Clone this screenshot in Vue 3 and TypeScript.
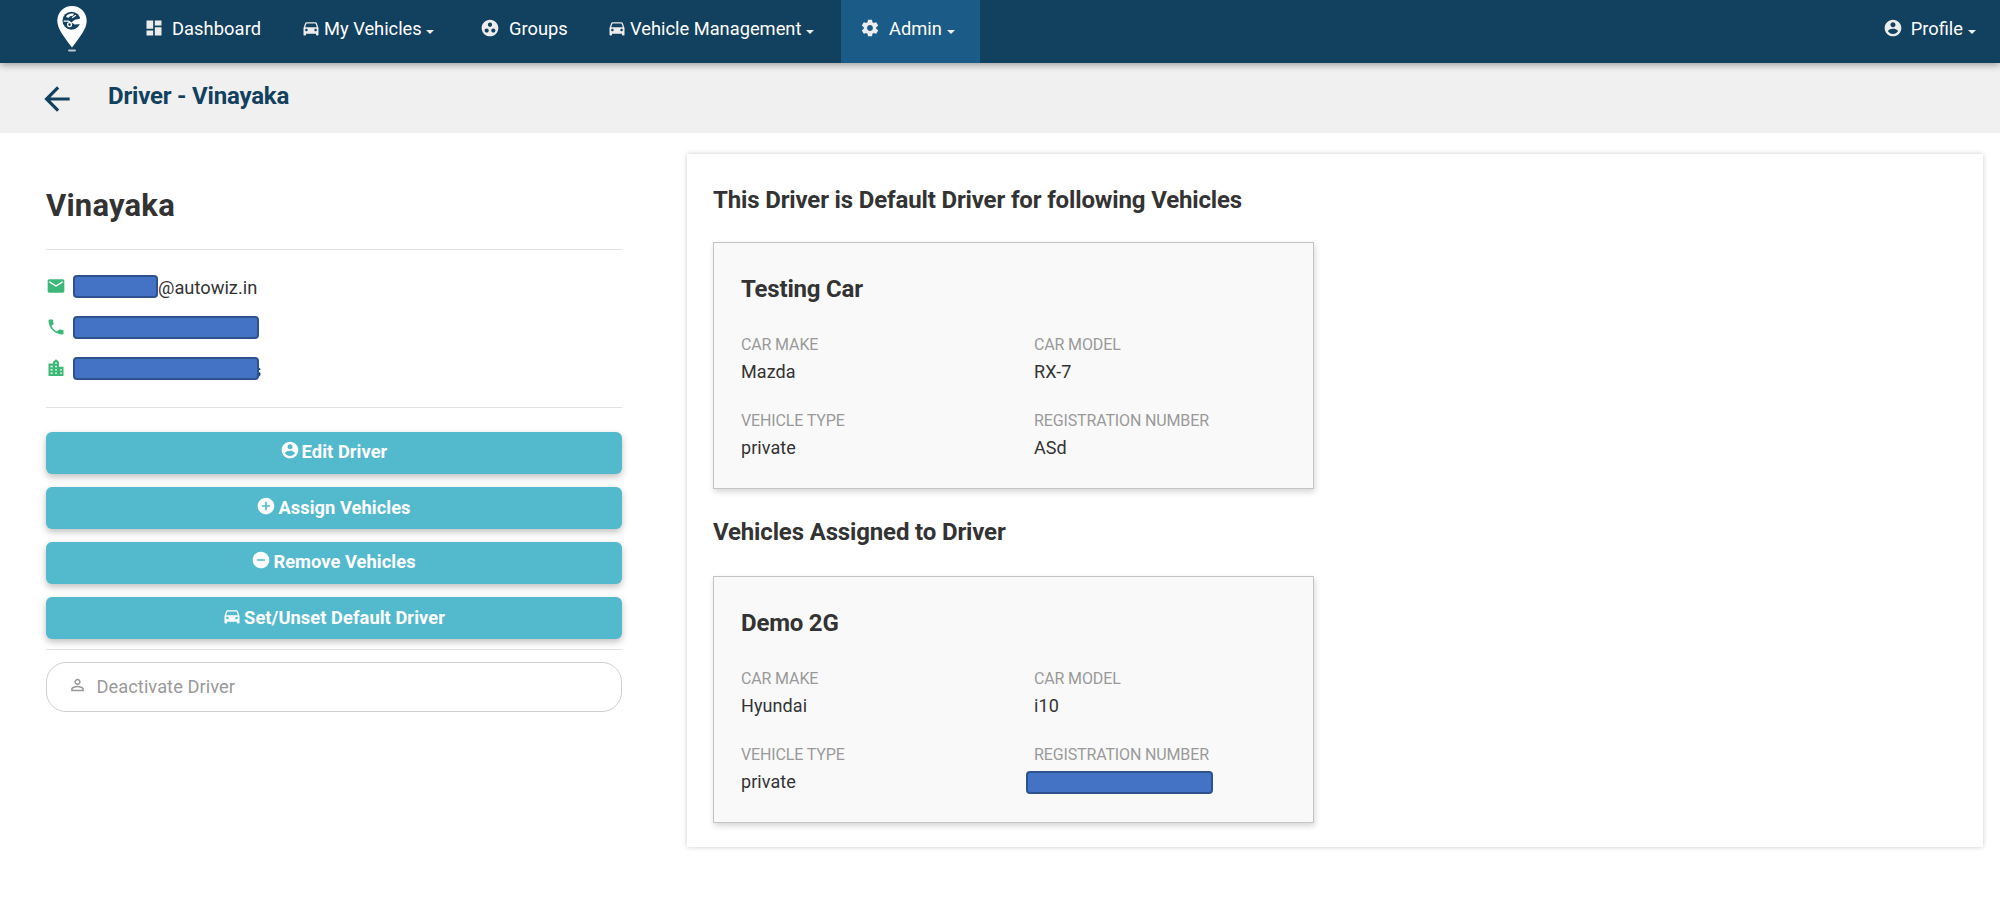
<script setup lang="ts">
interface NavItem { id: string; label: string; icon: string; caret: boolean; active?: boolean }
interface Action { id: string; label: string; icon: string }
interface Field { label: string; value: string; hidden?: boolean }
interface Vehicle { name: string; fields: Field[] }
interface Section { title: string; vehicle: Vehicle }

const icons: Record<string, string> = {
  dashboard: 'M3 13h8V3H3v10zm0 8h8v-6H3v6zm10 0h8V11h-8v10zm0-18v6h8V3h-8z',
  car: 'M18.92 6.01C18.72 5.42 18.16 5 17.5 5h-11c-.66 0-1.21.42-1.42 1.01L3 12v8c0 .55.45 1 1 1h1c.55 0 1-.45 1-1v-1h12v1c0 .55.45 1 1 1h1c.55 0 1-.45 1-1v-8l-2.08-5.99zM6.5 16c-.83 0-1.5-.67-1.5-1.5S5.67 13 6.5 13s1.5.67 1.5 1.5S7.33 16 6.5 16zm11 0c-.83 0-1.5-.67-1.5-1.5s.67-1.5 1.5-1.5 1.5.67 1.5 1.5-.67 1.5-1.5 1.5zM5 11l1.5-4.5h11L19 11H5z',
  group: 'M12 2C6.48 2 2 6.48 2 12s4.48 10 10 10 10-4.48 10-10S17.52 2 12 2zM8 17.5c-1.38 0-2.5-1.12-2.5-2.5s1.12-2.5 2.5-2.5 2.5 1.12 2.5 2.5-1.12 2.5-2.5 2.5zM9.5 8c0-1.38 1.12-2.5 2.5-2.5s2.5 1.12 2.5 2.5-1.12 2.5-2.5 2.5S9.5 9.38 9.5 8zm6.5 9.5c-1.38 0-2.5-1.12-2.5-2.5s1.12-2.5 2.5-2.5 2.5 1.12 2.5 2.5-1.12 2.5-2.5 2.5z',
  gear: 'M19.43 12.98c.04-.32.07-.64.07-.98s-.03-.66-.07-.98l2.11-1.65c.19-.15.24-.42.12-.64l-2-3.46c-.12-.22-.39-.3-.61-.22l-2.49 1c-.52-.4-1.08-.73-1.69-.98l-.38-2.65C14.46 2.18 14.25 2 14 2h-4c-.25 0-.46.18-.49.42l-.38 2.65c-.61.25-1.17.59-1.69.98l-2.49-1c-.23-.09-.49 0-.61.22l-2 3.46c-.13.22-.07.49.12.64l2.11 1.65c-.04.32-.07.65-.07.98s.03.66.07.98l-2.11 1.65c-.19.15-.24.42-.12.64l2 3.46c.12.22.39.3.61.22l2.49-1c.52.4 1.08.73 1.69.98l.38 2.65c.03.24.24.42.49.42h4c.25 0 .46-.18.49-.42l.38-2.65c.61-.25 1.17-.59 1.69-.98l2.49 1c.23.09.49 0 .61-.22l2-3.46c.12-.22.07-.49-.12-.64l-2.11-1.65zM12 15.5c-1.93 0-3.5-1.57-3.5-3.5s1.57-3.5 3.5-3.5 3.5 1.57 3.5 3.5-1.57 3.5-3.5 3.5z',
  account: 'M12 2C6.48 2 2 6.48 2 12s4.48 10 10 10 10-4.48 10-10S17.52 2 12 2zm0 3c1.66 0 3 1.34 3 3s-1.34 3-3 3-3-1.34-3-3 1.34-3 3-3zm0 14.2c-2.5 0-4.71-1.28-6-3.22.03-1.99 4-3.08 6-3.08 1.99 0 5.97 1.09 6 3.08-1.29 1.94-3.5 3.22-6 3.22z',
  plus: 'M12 2C6.48 2 2 6.48 2 12s4.48 10 10 10 10-4.48 10-10S17.52 2 12 2zm5 11h-4v4h-2v-4H7v-2h4V7h2v4h4v2z',
  minus: 'M12 2C6.48 2 2 6.48 2 12s4.48 10 10 10 10-4.48 10-10S17.52 2 12 2zm5 11H7v-2h10v2z',
  mail: 'M20 4H4c-1.1 0-1.99.9-1.99 2L2 18c0 1.1.9 2 2 2h16c1.1 0 2-.9 2-2V6c0-1.1-.9-2-2-2zm0 4l-8 5-8-5V6l8 5 8-5v2z',
  phone: 'M6.62 10.79c1.44 2.83 3.76 5.14 6.59 6.59l2.2-2.2c.27-.27.67-.36 1.02-.24 1.12.37 2.33.57 3.57.57.55 0 1 .45 1 1V20c0 .55-.45 1-1 1-9.39 0-17-7.61-17-17 0-.55.45-1 1-1h3.500c.55 0 1 .45 1 1 0 1.250.2 2.450.57 3.570.110.350.030.740-.250 1.020l-2.200 2.200z',
  city: 'M15.5 10.5v-6L12 1.500 8.500 4.500v2H3v15h18v-11h-5.500zM8 19H5.500v-1.600H8V19zm0-4H5.500v-1.600H8V15zm0-4H5.500V9.400H8V11zm5 8h-2v-1.600h2V19zm0-4h-2v-1.600h2V15zm0-4h-2V9.400h2V11zm0-4h-2V5.400h2V7zm6 12h-2v-1.600h2V19zm0-4h-2v-1.600h2V15z',
  person: 'M12 5.900c1.160 0 2.100.94 2.100 2.100s-.94 2.100-2.100 2.100S9.900 9.160 9.900 8s.94-2.100 2.100-2.100m0 9c2.970 0 6.100 1.460 6.100 2.100v1.100H5.900V17c0-.64 3.130-2.100 6.100-2.100M12 4C9.790 4 8 5.790 8 8s1.790 4 4 4 4-1.790 4-4-1.790-4-4-4zm0 9c-2.670 0-8 1.340-8 4v3h16v-3c0-2.660-5.330-4-8-4z',
  back: 'M20 11H7.83l5.590-5.590L12 4l-8 8 8 8 1.410-1.410L7.830 13H20v-2z',
}

const nav: NavItem[] = [
  { id: 'dashboard', label: 'Dashboard', icon: 'dashboard', caret: false },
  { id: 'vehicles', label: 'My Vehicles', icon: 'car', caret: true },
  { id: 'groups', label: 'Groups', icon: 'group', caret: false },
  { id: 'management', label: 'Vehicle Management', icon: 'car', caret: true },
  { id: 'admin', label: 'Admin', icon: 'gear', caret: true, active: true },
  { id: 'profile', label: 'Profile', icon: 'account', caret: true },
]

const actions: Action[] = [
  { id: 'edit', label: 'Edit Driver', icon: 'account' },
  { id: 'assign', label: 'Assign Vehicles', icon: 'plus' },
  { id: 'remove', label: 'Remove Vehicles', icon: 'minus' },
  { id: 'default', label: 'Set/Unset Default Driver', icon: 'car' },
]

const sections: Section[] = [
  {
    title: 'This Driver is Default Driver for following Vehicles',
    vehicle: {
      name: 'Testing Car',
      fields: [
        { label: 'CAR MAKE', value: 'Mazda' },
        { label: 'CAR MODEL', value: 'RX-7' },
        { label: 'VEHICLE TYPE', value: 'private' },
        { label: 'REGISTRATION NUMBER', value: 'ASd' },
      ],
    },
  },
  {
    title: 'Vehicles Assigned to Driver',
    vehicle: {
      name: 'Demo 2G',
      fields: [
        { label: 'CAR MAKE', value: 'Hyundai' },
        { label: 'CAR MODEL', value: 'i10' },
        { label: 'VEHICLE TYPE', value: 'private' },
        { label: 'REGISTRATION NUMBER', value: '', hidden: true },
      ],
    },
  },
]
</script>

<template>
  <div class="page">
    <nav class="navbar">
      <div class="brand">
        <svg class="logo" viewBox="0 0 32 48">
          <path fill="#fff" d="M16 0C7.500 0 1 6.500 1 15c0 8.500 7 16.500 15 27.500C24 31.500 31 23.500 31 15 31 6.500 24.500 0 16 0z" />
          <circle cx="15.500" cy="15" r="9.200" fill="#12405f" />
          <path fill="#fff" d="M26 12.500l-7 1.500-3.500 2.500 3 2.500 7.500-.5zM10 10.500c2-2.500 5-3.500 8-2.500l-1 2-3 .5-1.500 1.500-2-.5z" />
          <path fill="none" stroke="#fff" stroke-width="1.200" d="M7.500 15.500h5l3 2M16 12l4-2.500" />
          <circle cx="13.500" cy="19" r="2" fill="none" stroke="#fff" stroke-width="1.300" />
          <rect x="12" y="44.300" width="8" height="2.200" rx="1" fill="#b9c9d3" />
        </svg>
      </div>
      <a v-for="item in nav" :key="item.id" class="nav-item" :class="[item.id, { active: item.active }]">
        <svg class="icon" viewBox="0 0 24 24"><path :d="icons[item.icon]" /></svg>
        <span class="nav-label">{{ item.label }}</span>
        <i v-if="item.caret" class="caret"></i>
      </a>
    </nav>

    <header class="title-bar">
      <svg class="back" viewBox="0 0 24 24"><path :d="icons.back" /></svg>
      <h1>Driver - Vinayaka</h1>
    </header>

    <main class="content">
      <aside class="sidebar">
        <h2 class="driver-name">Vinayaka</h2>
        <ul class="contacts">
          <li>
            <svg class="icon" viewBox="0 0 24 24"><path :d="icons.mail" /></svg>
            <span class="redacted short"></span>
            <span class="email">@autowiz.in</span>
          </li>
          <li>
            <svg class="icon" viewBox="0 0 24 24"><path :d="icons.phone" /></svg>
            <span class="redacted"></span>
          </li>
          <li>
            <svg class="icon" viewBox="0 0 24 24"><path :d="icons.city" /></svg>
            <span class="redacted"></span>
            <span class="tail">s</span>
          </li>
        </ul>
        <div class="actions">
          <button v-for="action in actions" :key="action.id" class="action" :class="action.id" type="button">
            <svg class="icon" viewBox="0 0 24 24"><path :d="icons[action.icon]" /></svg>
            <span>{{ action.label }}</span>
          </button>
        </div>
        <button class="deactivate" type="button">
          <svg class="icon" viewBox="0 0 24 24"><path :d="icons.person" /></svg>
          <span>Deactivate Driver</span>
        </button>
      </aside>

      <section class="panel">
        <template v-for="section in sections" :key="section.title">
          <h3 class="section-title">{{ section.title }}</h3>
          <article class="card">
            <h4>{{ section.vehicle.name }}</h4>
            <dl>
              <div v-for="field in section.vehicle.fields" :key="field.label" class="field">
                <dt>{{ field.label }}</dt>
                <dd v-if="field.hidden"><span class="redacted plate"></span></dd>
                <dd v-else>{{ field.value }}</dd>
              </div>
            </dl>
          </article>
        </template>
      </section>
    </main>
  </div>
</template>

<style>
body {
  background: #fff;
}
</style>

<style scoped>
* {
  box-sizing: border-box;
}
.page {
  height: 911px;
  overflow: hidden;
  font-family: Roboto, "Liberation Sans", sans-serif;
  font-size: 18px;
  color: #333;
}
h1, h2, h3, h4, ul, dl, dd {
  margin: 0;
  padding: 0;
}
.icon {
  width: 20px;
  height: 20px;
  flex: none;
  fill: currentColor;
}
.navbar {
  position: relative;
  display: flex;
  height: 63px;
  background: #12405f;
  box-shadow: 0 2px 7px rgba(0, 0, 0, 0.35);
}
.brand {
  width: 144px;
  padding: 6px 0 0 56px;
}
.logo {
  display: block;
  width: 32px;
  height: 47px;
}
.nav-item {
  display: flex;
  align-items: center;
  height: 63px;
  padding-bottom: 6px;
  color: #fff;
}
.nav-item .icon {
  color: #ececec;
  margin-top: -2px;
}
.nav-label {
  margin-left: 8px;
  white-space: nowrap;
  font-size: 18.3px;
}
.dashboard { width: 157px; }
.dashboard .nav-label { letter-spacing: 0.08px; }
.vehicles { width: 179px; }
.groups { width: 127px; }
.management { width: 234px; }
.admin { width: 139px; padding-left: 19px; }
.profile { margin-left: auto; padding-right: 24px; }
.vehicles .nav-label, .management .nav-label { margin-left: 3px; }
.groups .nav-label, .admin .nav-label { margin-left: 9px; }
.active {
  background: #1a5b87;
}
.caret {
  margin: 6px 0 0 5px;
  border: 4px solid transparent;
  border-top-color: #eee;
  border-bottom: 0;
}
.vehicles .caret { margin-left: 4px; }
.title-bar {
  display: flex;
  height: 70px;
  padding-left: 38px;
  background: #f0f0f0;
  color: #12405f;
}
.back {
  width: 38px;
  height: 38px;
  margin-top: 17px;
  fill: currentColor;
}
h1 {
  margin-left: 32px;
  font-size: 24px;
  font-weight: 700;
  letter-spacing: -0.2px;
  line-height: 66px;
}
.content {
  display: flex;
  align-items: flex-start;
  padding: 21px 17px 0 45.500px;
}
.sidebar {
  width: 576px;
  margin-right: 65.500px;
}
.driver-name {
  height: 96px;
  padding: 32px 0 0 0.500px;
  border-bottom: 1px solid #e2e2e2;
  font-size: 31px;
  font-weight: 700;
  letter-spacing: 0.2px;
  line-height: 40px;
}
.contacts {
  display: grid;
  grid-auto-rows: 41px;
  height: 158px;
  padding-top: 16px;
  border-bottom: 1px solid #e2e2e2;
  list-style: none;
}
.contacts li {
  display: flex;
  align-items: center;
}
.contacts .icon {
  margin: -2px 7.500px 0 0;
  color: #3cb878;
}
.redacted {
  position: relative;
  z-index: 1;
  display: block;
  width: 186px;
  height: 23px;
  border: 2px solid #2f528f;
  border-radius: 4px;
  background: #4472c4;
}
.redacted.short {
  width: 85px;
}
.email {
  margin-top: 2px;
  font-size: 18.3px;
}
.tail {
  margin: 3px 0 0 -7px;
}
.actions {
  display: grid;
  gap: 13px;
  padding: 24px 0 10px;
  border-bottom: 1px solid #e2e2e2;
}
button {
  font-family: inherit;
  font-size: 18px;
}
.action {
  display: flex;
  align-items: center;
  justify-content: center;
  gap: 2px;
  height: 42px;
  padding: 0 0 2px;
  border: 0;
  border-radius: 6px;
  background: #53b9cd;
  color: #fff;
  font-size: 18.3px;
  font-weight: 700;
  letter-spacing: 0.06px;
  box-shadow: 0 3px 7px rgba(0, 0, 0, 0.25);
}
.action.edit, .action.remove {
  padding-bottom: 4px;
}
.action .icon {
  margin-top: -2px;
}
.deactivate {
  display: flex;
  align-items: center;
  width: 100%;
  height: 50px;
  margin-top: 12px;
  padding: 0 21px 2px;
  border: 1px solid #d0d0d0;
  border-radius: 20px;
  background: #fff;
  color: #999;
  font-size: 18.3px;
  letter-spacing: 0.04px;
}
.deactivate .icon {
  margin: -2px 10px 0 0;
  width: 19px;
}
.panel {
  width: 1295.500px;
  height: 693px;
  padding: 0 26px;
  box-shadow: 0 0 5px rgba(0, 0, 0, 0.2);
}
.section-title {
  height: 88px;
  font-size: 24px;
  font-weight: 700;
  letter-spacing: -0.15px;
  line-height: 93px;
}
.card {
  width: 601px;
  height: 247px;
  padding: 26px 27px;
  border: 1px solid #c4c4c4;
  background: #f9f9f9;
  box-shadow: 1px 3px 6px rgba(0, 0, 0, 0.16);
}
.card + .section-title {
  height: 87px;
  line-height: 87px;
}
h4 {
  font-size: 24px;
  font-weight: 700;
  letter-spacing: -0.2px;
  line-height: 40px;
}
dl {
  display: grid;
  grid-template-columns: 293px 1fr;
  grid-auto-rows: 76px;
  padding-top: 22px;
}
dt {
  color: #999;
  font-size: 16px;
  letter-spacing: -0.14px;
  line-height: 28px;
}
dd {
  letter-spacing: 0.08px;
  line-height: 25px;
}
.plate {
  width: 187px;
  margin: 2px 0 0 -8px;
}
</style>
